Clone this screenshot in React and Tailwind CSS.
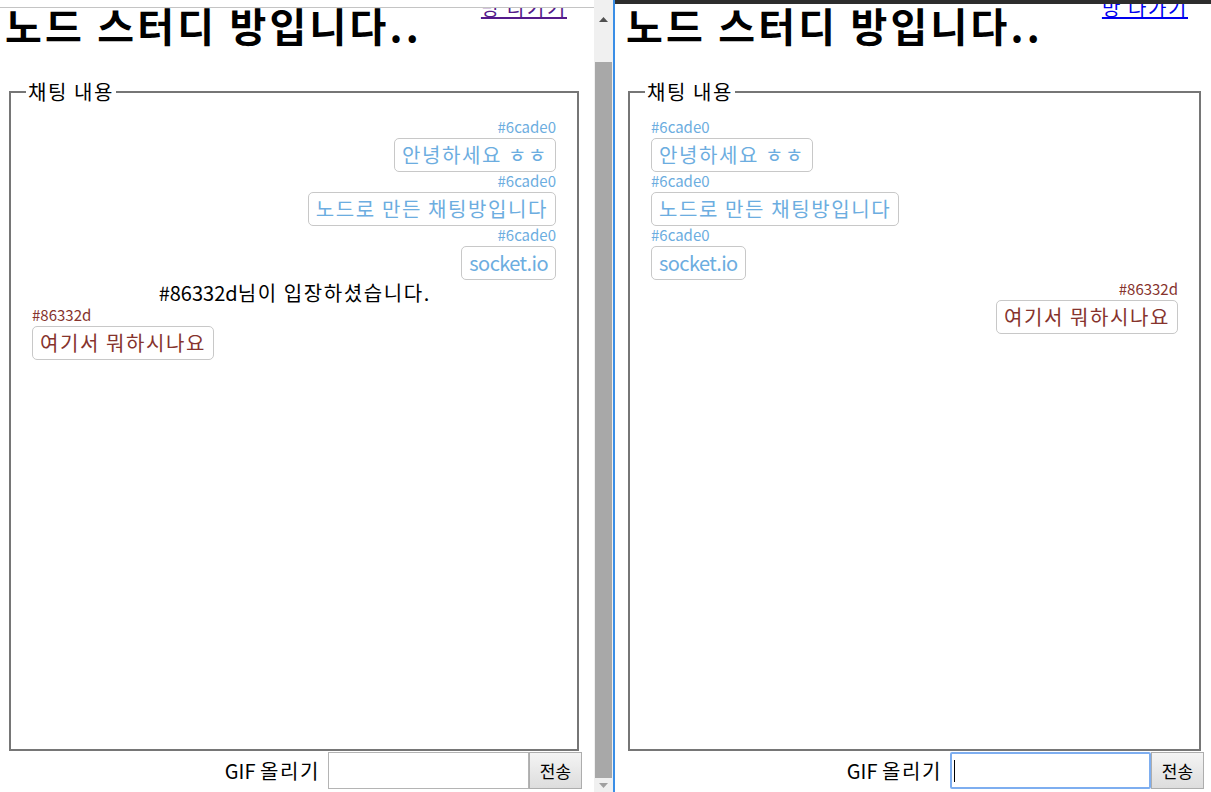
import React from 'react';

// two browser windows side by side, same chat room seen by two users
const leftMessages = [
  { id: 1, type: 'mine', user: '#6cade0', text: '안녕하세요 ㅎㅎ' },
  { id: 2, type: 'mine', user: '#6cade0', text: '노드로 만든 채팅방입니다' },
  { id: 3, type: 'mine', user: '#6cade0', text: 'socket.io' },
  { id: 4, type: 'system', text: '#86332d님이 입장하셨습니다.' },
  { id: 5, type: 'other', user: '#86332d', text: '여기서 뭐하시나요' },
];

const rightMessages = [
  { id: 1, type: 'other', user: '#6cade0', text: '안녕하세요 ㅎㅎ' },
  { id: 2, type: 'other', user: '#6cade0', text: '노드로 만든 채팅방입니다' },
  { id: 3, type: 'other', user: '#6cade0', text: 'socket.io' },
  { id: 5, type: 'mine', user: '#86332d', text: '여기서 뭐하시나요' },
];

const HANGUL = /[\u3131-\u318E\uAC00-\uD7A3]/;

// hangul runs get a bit of tracking so they sit as wide as the original font
const Ko = ({ children }) => {
  const parts = String(children).split(/([\u3131-\u318E\uAC00-\uD7A3][\u3131-\u318E\uAC00-\uD7A3 ]*)/);
  return parts.map((p, i) =>
    HANGUL.test(p) ? (
      <span key={i} className="tracking-[0.08em]">{p}</span>
    ) : (
      <React.Fragment key={i}>{p}</React.Fragment>
    )
  );
};

const Message = ({ msg }) => {
  if (msg.type === 'system') {
    return (
      <div className="text-center text-[20px] leading-[26px] text-black">
        <Ko>{msg.text}</Ko>
      </div>
    );
  }
  const color = msg.user === '#6cade0' ? 'text-[#6cade0]' : 'text-[#86332d]';
  const align = msg.type === 'mine' ? 'items-end' : 'items-start';
  const latinOnly = !HANGUL.test(msg.text);
  return (
    <div className={`flex flex-col ${align} ${color}`}>
      <div className="text-[15px] leading-[18px] mb-[2px]">{msg.user}</div>
      <div
        className={`border border-[#c8c8c8] rounded-[5px] px-[7px] text-[20px] leading-[32px] ${
          latinOnly ? 'tracking-[-0.03em]' : ''
        }`}
      >
        <Ko>{msg.text}</Ko>
      </div>
    </div>
  );
};

const ChatWindow = ({ messages, ui }) => {
  return (
    <div className="flex flex-col pt-[5px] h-full">
      {/* header */}
      <div className={`flex items-start justify-between h-[40px] ${ui.header}`}>
        <h1 className="text-[40px] leading-[40px] font-bold text-black tracking-[0.08em]">노드 스터디 방입니다..</h1>
        <a href="#" className={`-mt-[7px] text-[20px] leading-[20px] underline tracking-[0.08em] ${ui.link}`}>
          방 나가기
        </a>
      </div>

      {/* chat box */}
      <fieldset className={`mt-[34px] h-[672px] border-2 border-[#767676] px-[15px] ${ui.fieldset}`}>
        <legend className="px-[2px] text-[20px] leading-[26px] text-black tracking-[0.08em]">채팅 내용</legend>
        <div className="flex flex-col pt-[13px] px-[6px]">
          {messages.map((m) => (
            <Message key={m.id} msg={m} />
          ))}
        </div>
      </fieldset>

      {/* form */}
      <form className={`mt-[1px] flex items-center justify-end h-[37px] ${ui.form}`}>
        <label className="text-[20px] text-black mr-[8px]">
          <Ko>GIF 올리기</Ko>
        </label>
        {ui.focused ? (
          <div className="w-[201px] h-[37px] border-2 border-[#7eaef0] rounded-[2px] flex items-center pl-[2px]">
            <span className="w-[1px] h-[22px] bg-black" />
          </div>
        ) : (
          <input type="text" className="w-[201px] h-[37px] border border-[#b4b4b4] bg-white outline-none" />
        )}
        <button
          type="button"
          className="w-[53px] h-[37px] border border-[#adadad] bg-gradient-to-b from-[#f4f4f4] to-[#dddddd] text-[17px] text-black"
        >
          전송
        </button>
      </form>
    </div>
  );
};

const Scrollbar = () => (
  <div className="w-[19px] h-full bg-[#f0f0f0] flex flex-col items-center">
    <div className="h-[40px] w-full flex items-center justify-center pb-[1px]">
      <svg width="9" height="5" viewBox="0 0 9 5">
        <path d="M4.5 0L9 5H0z" fill="#505050" />
      </svg>
    </div>
    <div className="mt-[22px] w-[17px] flex-1 bg-[#a8a8a8]" />
    <div className="h-[14px] w-full flex items-center justify-center">
      <svg width="9" height="5" viewBox="0 0 9 5">
        <path d="M0 0H9L4.5 5z" fill="#a0a0a0" />
      </svg>
    </div>
  </div>
);

export default function App() {
  return (
    <div className="flex w-[1211px] h-[792px] overflow-hidden bg-white font-['Noto_Sans_CJK_KR','Noto_Sans',sans-serif]">
      {/* left window */}
      <div className="relative flex w-[613px] h-full">
        <div className="w-[594px] h-full overflow-hidden">
          <ChatWindow
            messages={leftMessages}
            ui={{
              header: 'pl-[5px] pr-[27px]',
              link: 'text-[#551a8b]',
              fieldset: 'ml-[9px] mr-[15px]',
              form: 'pr-[12px]',
              focused: false,
            }}
          />
        </div>
        <Scrollbar />
        {/* browser chrome edge over the page top */}
        <div className="absolute left-0 top-0 w-[594px] h-[8px] bg-white border-b border-[#c4c4c4]" />
      </div>

      {/* window divider */}
      <div className="w-[2px] h-full bg-[#3a8ee6]" />

      {/* right window */}
      <div className="relative flex-1 h-full overflow-hidden">
        <ChatWindow
          messages={rightMessages}
          ui={{
            header: 'pl-[11px] pr-[23px]',
            link: 'text-[#0000ee]',
            fieldset: 'ml-[13px] mr-[10px]',
            form: 'pr-[7px]',
            focused: true,
          }}
        />
        <div className="absolute left-0 top-0 w-full h-[4px] bg-[#2d2d2d]" />
      </div>
    </div>
  );
}
